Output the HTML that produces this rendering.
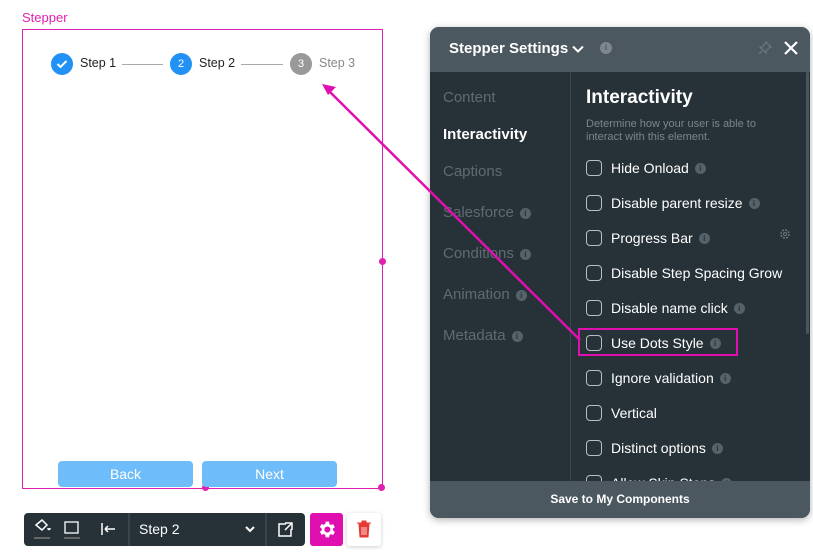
<!DOCTYPE html>
<html><head><meta charset="utf-8"><style>
*{box-sizing:border-box;margin:0;padding:0}
body{width:813px;height:553px;background:#fff;font-family:"Liberation Sans",sans-serif;position:relative;overflow:hidden}
.abs{position:absolute}
.lbl{left:22px;top:10px;color:#e020b0;font-size:13px}
.box{left:22px;top:29px;width:361px;height:460px;border:1px solid #e020b0}
.dot{width:7px;height:7px;border-radius:50%;background:#e020b0}
.circ{width:22px;height:22px;border-radius:50%;color:#fff;font-size:11px;display:flex;align-items:center;justify-content:center}
.st{font-size:12.5px;color:#222}
.ln{height:1px;background:#aaa}
.btn{top:461px;width:135px;height:26px;background:#6ebdfa;border-radius:4px;color:#fff;font-size:14px;text-align:center;line-height:26px}
.panel{left:430px;top:27px;width:380px;height:491px;border-radius:9px;background:#263238;overflow:hidden;box-shadow:0 2px 8px rgba(0,0,0,.3)}
.hdr{left:0;top:0;width:380px;height:45px;background:#4b585f}
.nav{left:13px;font-size:15px;color:#5f6b72}
.inf{display:inline-block;width:11px;height:11px;border-radius:50%;background:#56626a;color:#263238;font-size:8px;font-weight:bold;text-align:center;line-height:11px;vertical-align:middle;margin-left:6px}
.it{left:156px;font-size:14px;color:#fff;display:flex;align-items:center;height:20px}
.cb{width:16px;height:16px;border:1.5px solid #b8bfc3;border-radius:4px;margin-right:9px}
.ft{left:0;top:454px;width:380px;height:37px;background:#4b585f;color:#fff;font-size:12px;font-weight:bold;text-align:center;line-height:37px}
</style></head><body>
<div class="abs lbl">Stepper</div>
<div class="abs box"></div>
<div class="abs dot" style="left:379px;top:258px"></div>
<div class="abs dot" style="left:202px;top:484px"></div>
<div class="abs dot" style="left:378px;top:484px"></div>
<div class="abs circ" style="left:51px;top:53px;background:#2291f5"><svg width="12" height="10" viewBox="0 0 12 10"><path d="M1.5 5l3 3 6-6" stroke="#fff" stroke-width="2" fill="none"/></svg></div>
<div class="abs st" style="left:80px;top:56px">Step 1</div>
<div class="abs ln" style="left:122px;top:64px;width:41px"></div>
<div class="abs circ" style="left:170px;top:53px;background:#2291f5">2</div>
<div class="abs st" style="left:199px;top:56px">Step 2</div>
<div class="abs ln" style="left:241px;top:64px;width:42px"></div>
<div class="abs circ" style="left:290px;top:53px;background:#999">3</div>
<div class="abs st" style="left:319px;top:56px;color:#888">Step 3</div>
<div class="abs btn" style="left:58px">Back</div>
<div class="abs btn" style="left:202px">Next</div>

<div class="abs" style="left:24px;top:513px;width:281px;height:33px;background:#263238;border-radius:4px"></div>
<svg class="abs" style="left:24px;top:513px" width="281" height="33">
<path d="M12 12l6-5 5 5-5 5zM24 15c0 2 2 2 2 0" stroke="#fff" stroke-width="1.5" fill="none"/><rect x="10" y="24" width="16" height="2" fill="#666"/>
<rect x="41" y="9" width="13" height="11" stroke="#fff" stroke-width="1.3" fill="none"/><rect x="40" y="24" width="16" height="2" fill="#666"/>
<path d="M78 10v12M81 16h10M81 16l3-3M81 16l3 3" stroke="#fff" stroke-width="1.5" fill="none"/>
<line x1="105" y1="0" x2="105" y2="33" stroke="#4a555b"/>
<text x="115" y="21" fill="#fff" font-size="14" font-family="Liberation Sans">Step 2</text>
<path d="M222 14l4 4 4-4" stroke="#fff" stroke-width="2" fill="none"/>
<line x1="242" y1="0" x2="242" y2="33" stroke="#4a555b"/>
<path d="M262 11h-7v12h12v-7M261 10h7v7M268 10l-7 7" stroke="#fff" stroke-width="1.5" fill="none"/>
</svg>
<div class="abs" style="left:310px;top:513px;width:33px;height:33px;background:#e010b0;border-radius:3px"></div>
<svg class="abs" style="left:316px;top:519px" width="21" height="21" viewBox="0 0 24 24"><path fill="#fff" d="M19.4 13a7.5 7.5 0 000-2l2.1-1.6-2-3.5-2.5 1a7 7 0 00-1.7-1L15 3h-4l-.4 2.7a7 7 0 00-1.7 1l-2.5-1-2 3.5L6.6 11a7.5 7.5 0 000 2l-2.1 1.6 2 3.5 2.5-1a7 7 0 001.7 1L11 21h4l.4-2.7a7 7 0 001.7-1l2.5 1 2-3.5zM13 15.5a3.5 3.5 0 110-7 3.5 3.5 0 010 7z"/></svg>
<div class="abs" style="left:347px;top:513px;width:34px;height:33px;background:#fff;border-radius:3px;box-shadow:0 1px 4px rgba(0,0,0,.2)"></div>
<svg class="abs" style="left:356px;top:520px" width="16" height="18"><path d="M1 3h14M6 3V1h4v2M3 4h10l-1 13H4z" fill="#e53935" stroke="#e53935" stroke-width="1"/><path d="M6 7v8M8 7v8M10 7v8" stroke="#fff" stroke-width=".8"/></svg>

<div class="abs panel">
<div class="abs hdr"></div>
<div class="abs" style="left:19px;top:13px;color:#fff;font-size:15px;font-weight:bold">Stepper Settings</div>
<svg class="abs" style="left:142px;top:18px" width="12" height="9"><path d="M1 1.5l5 5 5-5" stroke="#fff" stroke-width="2" fill="none"/></svg>
<div class="abs inf" style="left:170px;top:15px;margin:0;width:12px;height:12px;background:#7d888e;color:#4b585f;line-height:12px">i</div>
<svg class="abs" style="left:328px;top:14px" width="14" height="14"><path d="M8 1l5 5-2 1-3 3v2l-6-6h2l3-3z M4 10l-3 3" stroke="#6a767c" fill="none" stroke-width="1.3"/></svg>
<svg class="abs" style="left:353px;top:13px" width="16" height="16"><path d="M2 2l12 12M14 2L2 14" stroke="#fff" stroke-width="2.2"/></svg>
<div class="abs" style="left:140px;top:45px;width:1px;height:409px;background:#3c474d"></div>
<div class="abs" style="left:376px;top:45px;width:3px;height:262px;background:#4b565c;border-radius:2px"></div>
<div class="abs nav" style="top:62px">Content</div>
<div class="abs nav" style="top:99px;color:#fff;font-weight:bold">Interactivity</div>
<div class="abs nav" style="top:136px">Captions</div>
<div class="abs nav" style="top:177px">Salesforce<span class="inf">i</span></div>
<div class="abs nav" style="top:218px">Conditions<span class="inf">i</span></div>
<div class="abs nav" style="top:259px">Animation<span class="inf">i</span></div>
<div class="abs nav" style="top:300px">Metadata<span class="inf">i</span></div>
<div class="abs" style="left:156px;top:60px;color:#fff;font-size:19px;font-weight:bold">Interactivity</div>
<div class="abs" style="left:156px;top:91px;color:#7a868c;font-size:11px;line-height:13px">Determine how your user is able to<br>interact with this element.</div>
<div class="abs it" style="top:131px"><div class="cb"></div>Hide Onload<span class="inf">i</span></div>
<div class="abs it" style="top:166px"><div class="cb"></div>Disable parent resize<span class="inf">i</span></div>
<div class="abs it" style="top:201px"><div class="cb"></div>Progress Bar<span class="inf">i</span></div>
<svg class="abs" style="left:349px;top:201px" width="12" height="12" viewBox="0 0 24 24"><circle cx="12" cy="12" r="8" stroke="#6a767c" stroke-width="3" stroke-dasharray="4 2.3" fill="none"/><circle cx="12" cy="12" r="3" stroke="#6a767c" stroke-width="2" fill="none"/></svg>
<div class="abs it" style="top:236px"><div class="cb"></div>Disable Step Spacing Grow</div>
<div class="abs it" style="top:271px"><div class="cb"></div>Disable name click<span class="inf">i</span></div>
<div class="abs it" style="top:306px"><div class="cb"></div>Use Dots Style<span class="inf">i</span></div>
<div class="abs" style="left:148px;top:301px;width:160px;height:28px;border:2.5px solid #e010b0"></div>
<div class="abs it" style="top:341px"><div class="cb"></div>Ignore validation<span class="inf">i</span></div>
<div class="abs it" style="top:376px"><div class="cb"></div>Vertical</div>
<div class="abs it" style="top:411px"><div class="cb"></div>Distinct options<span class="inf">i</span></div>
<div class="abs it" style="top:446px"><div class="cb"></div>Allow Skip Steps<span class="inf">i</span></div>
<div class="abs ft">Save to My Components</div>
</div>
<svg class="abs" style="left:0;top:0" width="813" height="553"><line x1="580" y1="340" x2="330" y2="92" stroke="#e010b0" stroke-width="2.5"/><path d="M322 84l14 3-8 8z" fill="#e010b0"/></svg>
</body></html>
